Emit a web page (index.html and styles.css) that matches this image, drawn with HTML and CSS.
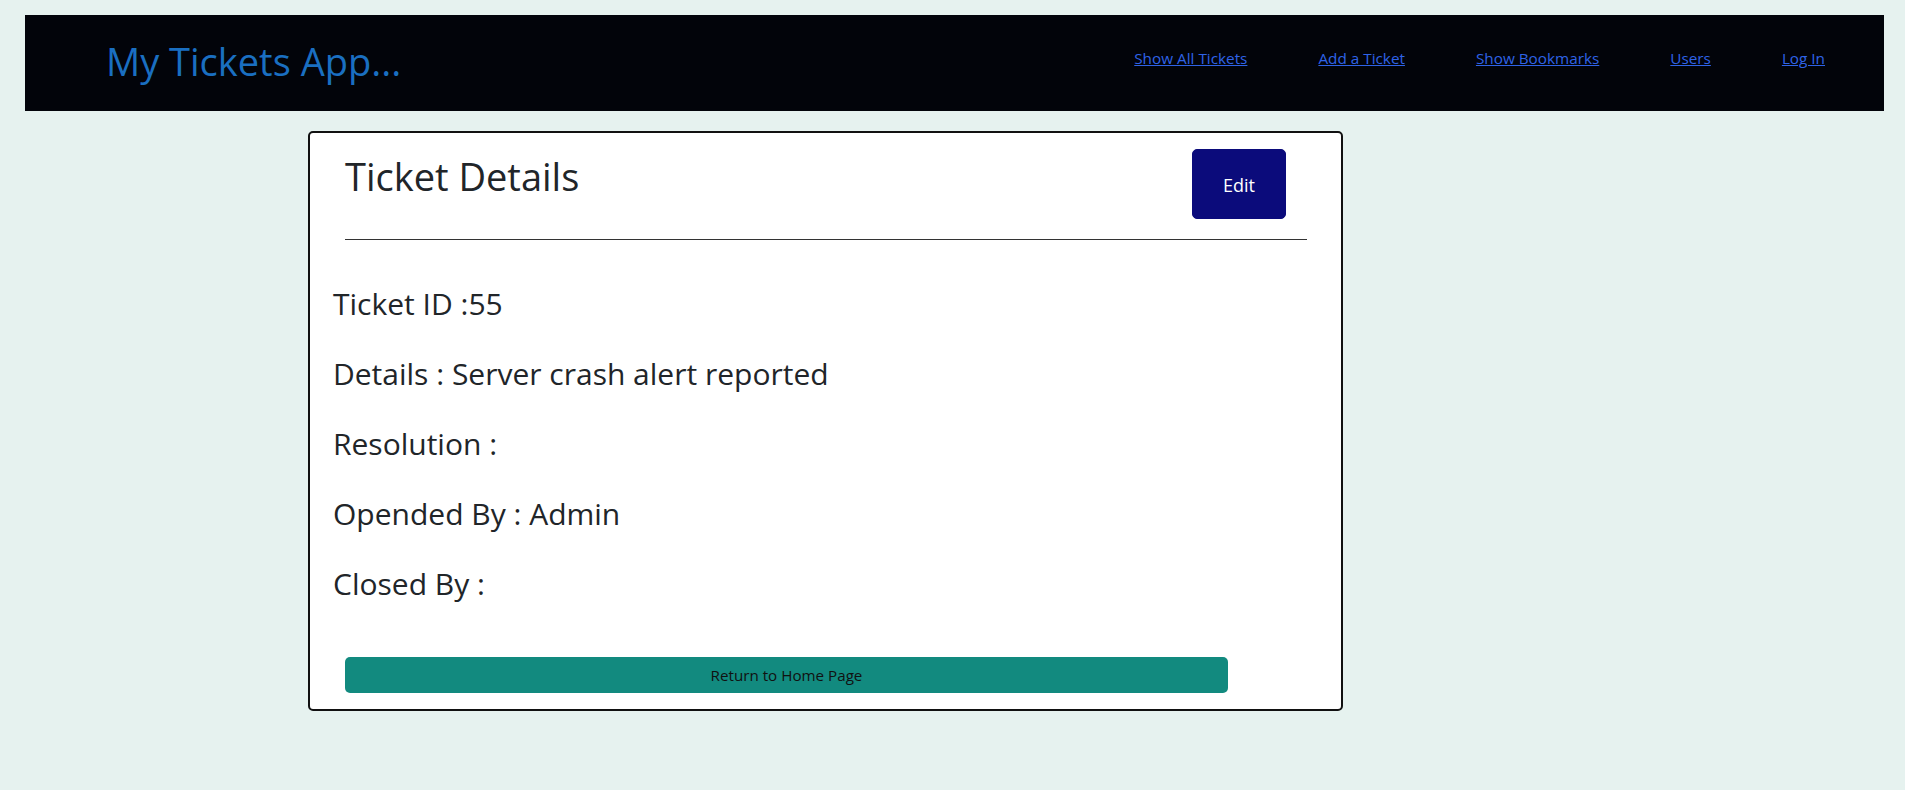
FILE: index.html
```html
<!DOCTYPE html>
<html lang="en">
<head>
<meta charset="utf-8">
<title>My Tickets App</title>
<link rel="stylesheet" href="styles.css">
</head>
<body>
<header class="navbar">
  <a class="brand">My Tickets App...</a>
  <nav class="nav-links">
    <a href="#">Show All Tickets</a>
    <a href="#">Add a Ticket</a>
    <a href="#">Show Bookmarks</a>
    <a href="#">Users</a>
    <a href="#">Log In</a>
  </nav>
</header>
<main class="page">
  <section class="card">
    <div class="card-header">
      <h1 class="card-title">Ticket Details</h1>
      <button class="btn-edit">Edit</button>
    </div>
    <hr class="divider">
    <div class="details">
      <p class="detail">Ticket ID :55</p>
      <p class="detail">Details : Server crash alert reported</p>
      <p class="detail">Resolution :</p>
      <p class="detail">Opended By : Admin</p>
      <p class="detail">Closed By :</p>
    </div>
    <button class="btn-return">Return to Home Page</button>
  </section>
</main>
</body>
</html>
```
FILE: styles.css
```css
* { box-sizing: border-box; }
html, body {
  margin: 0;
  background: #e6f2ef;
  font-family: "Open Sans", "Noto Sans", sans-serif;
  color: #212529;
}
.navbar {
  margin: 15px 21px 0 25px;
  height: 96px;
  background: #02040a;
  display: flex;
  align-items: center;
  justify-content: space-between;
  padding: 0 59px 4px 81px;
}
.brand {
  color: #1a6fc1;
  font-size: 38px;
  line-height: 1;
  margin-top: 0;
}
.nav-links {
  display: flex;
  gap: 71px;
  margin-top: -6px;
}
.nav-links a {
  color: #2f63e6;
  font-size: 15.3px;
  text-decoration: underline;
}
.page {
  padding: 20px 0 40px 308px;
}
.card {
  width: 1035px;
  background: #fff;
  border: 2px solid #111;
  border-radius: 5px;
  padding: 16px 0 16px 0;
}
.card-header {
  display: flex;
  justify-content: space-between;
  align-items: flex-start;
  padding: 0 55px 0 35px;
}
.card-title {
  margin: 5px 0 0;
  font-size: 38px;
  font-weight: 400;
  line-height: 1.2;
}
.btn-edit {
  width: 94px;
  height: 70px;
  padding-top: 2px;
  background: #0b0b7b;
  color: #fff;
  border: 1px solid #0b0b7b;
  border-radius: 5px;
  font-family: inherit;
  font-size: 18px;
}
.divider {
  margin: 20px 34px 0 35px;
  border: 0;
  border-top: 1px solid #333;
}
.details {
  padding: 47px 0 0 23px;
}
.detail {
  margin: 0 0 36px;
  font-size: 30px;
  line-height: 34px;
}
.detail:last-child { margin-bottom: 0; }
.btn-return {
  display: block;
  margin: 56px 0 0 35px;
  width: 883px;
  height: 36px;
  background: #128a7f;
  color: #111;
  border: 0;
  border-radius: 5px;
  font-family: inherit;
  font-size: 15.2px;
}
```
